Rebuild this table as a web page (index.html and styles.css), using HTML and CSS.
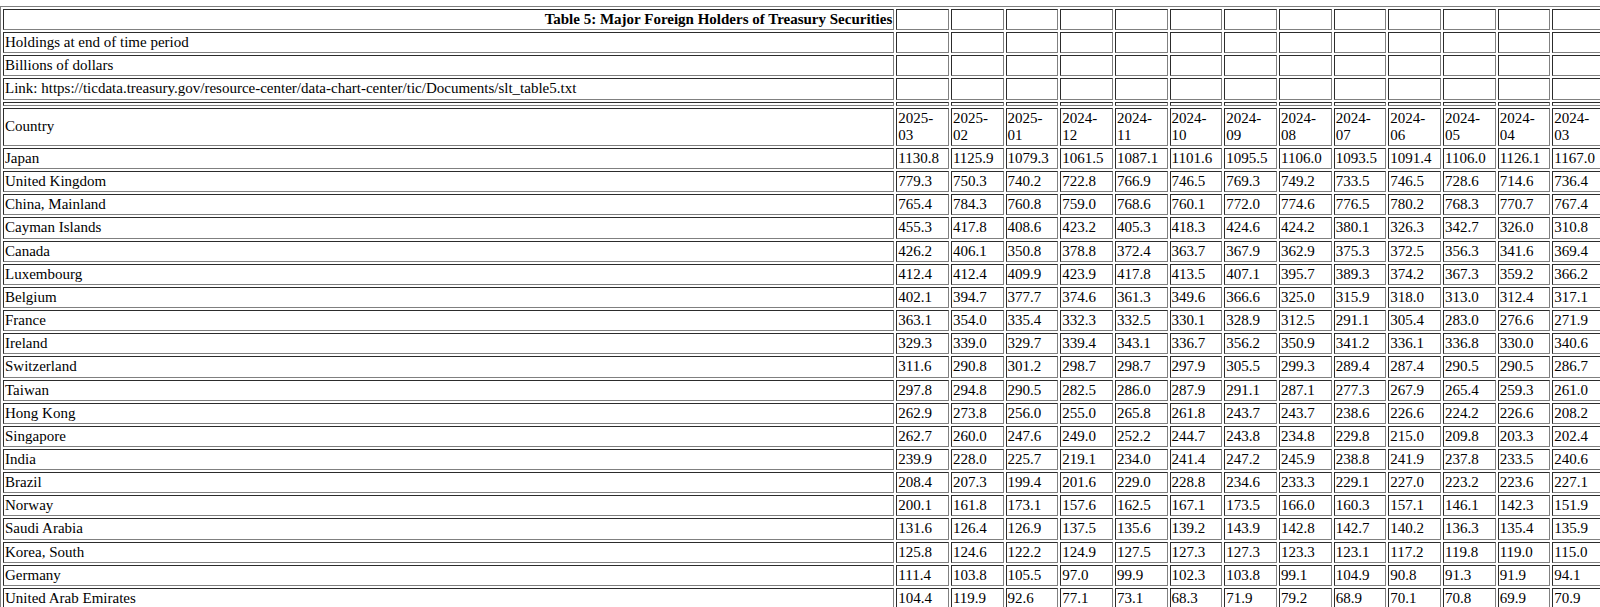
FILE: index.html
```html
<!DOCTYPE html>
<html lang="en">
<head>
<meta charset="utf-8">
<title>Table 5: Major Foreign Holders of Treasury Securities</title>
<link rel="stylesheet" href="styles.css">
</head>
<body>
<table class="sheet">
<tbody>
<tr><td class="cc title">Table 5: Major Foreign Holders of Treasury Securities</td><td class="v"></td><td class="v"></td><td class="v"></td><td class="v"></td><td class="v"></td><td class="v"></td><td class="v"></td><td class="v"></td><td class="v"></td><td class="v"></td><td class="v"></td><td class="v"></td><td class="v"></td></tr>
<tr><td class="cc">Holdings at end of time period</td><td></td><td></td><td></td><td></td><td></td><td></td><td></td><td></td><td></td><td></td><td></td><td></td><td></td></tr>
<tr><td class="cc">Billions of dollars</td><td></td><td></td><td></td><td></td><td></td><td></td><td></td><td></td><td></td><td></td><td></td><td></td><td></td></tr>
<tr><td class="cc">Link: https://ticdata.treasury.gov/resource-center/data-chart-center/tic/Documents/slt_table5.txt</td><td></td><td></td><td></td><td></td><td></td><td></td><td></td><td></td><td></td><td></td><td></td><td></td><td></td></tr>
<tr class="sep"><td></td><td></td><td></td><td></td><td></td><td></td><td></td><td></td><td></td><td></td><td></td><td></td><td></td><td></td></tr>
<tr><td class="cc">Country</td><td>2025-<br>03</td><td>2025-<br>02</td><td>2025-<br>01</td><td>2024-<br>12</td><td>2024-<br>11</td><td>2024-<br>10</td><td>2024-<br>09</td><td>2024-<br>08</td><td>2024-<br>07</td><td>2024-<br>06</td><td>2024-<br>05</td><td>2024-<br>04</td><td>2024-<br>03</td></tr>
<tr><td>Japan</td><td>1130.8</td><td>1125.9</td><td>1079.3</td><td>1061.5</td><td>1087.1</td><td>1101.6</td><td>1095.5</td><td>1106.0</td><td>1093.5</td><td>1091.4</td><td>1106.0</td><td>1126.1</td><td>1167.0</td></tr>
<tr><td>United Kingdom</td><td>779.3</td><td>750.3</td><td>740.2</td><td>722.8</td><td>766.9</td><td>746.5</td><td>769.3</td><td>749.2</td><td>733.5</td><td>746.5</td><td>728.6</td><td>714.6</td><td>736.4</td></tr>
<tr><td>China, Mainland</td><td>765.4</td><td>784.3</td><td>760.8</td><td>759.0</td><td>768.6</td><td>760.1</td><td>772.0</td><td>774.6</td><td>776.5</td><td>780.2</td><td>768.3</td><td>770.7</td><td>767.4</td></tr>
<tr><td>Cayman Islands</td><td>455.3</td><td>417.8</td><td>408.6</td><td>423.2</td><td>405.3</td><td>418.3</td><td>424.6</td><td>424.2</td><td>380.1</td><td>326.3</td><td>342.7</td><td>326.0</td><td>310.8</td></tr>
<tr><td>Canada</td><td>426.2</td><td>406.1</td><td>350.8</td><td>378.8</td><td>372.4</td><td>363.7</td><td>367.9</td><td>362.9</td><td>375.3</td><td>372.5</td><td>356.3</td><td>341.6</td><td>369.4</td></tr>
<tr><td>Luxembourg</td><td>412.4</td><td>412.4</td><td>409.9</td><td>423.9</td><td>417.8</td><td>413.5</td><td>407.1</td><td>395.7</td><td>389.3</td><td>374.2</td><td>367.3</td><td>359.2</td><td>366.2</td></tr>
<tr><td>Belgium</td><td>402.1</td><td>394.7</td><td>377.7</td><td>374.6</td><td>361.3</td><td>349.6</td><td>366.6</td><td>325.0</td><td>315.9</td><td>318.0</td><td>313.0</td><td>312.4</td><td>317.1</td></tr>
<tr><td>France</td><td>363.1</td><td>354.0</td><td>335.4</td><td>332.3</td><td>332.5</td><td>330.1</td><td>328.9</td><td>312.5</td><td>291.1</td><td>305.4</td><td>283.0</td><td>276.6</td><td>271.9</td></tr>
<tr><td>Ireland</td><td>329.3</td><td>339.0</td><td>329.7</td><td>339.4</td><td>343.1</td><td>336.7</td><td>356.2</td><td>350.9</td><td>341.2</td><td>336.1</td><td>336.8</td><td>330.0</td><td>340.6</td></tr>
<tr><td>Switzerland</td><td>311.6</td><td>290.8</td><td>301.2</td><td>298.7</td><td>298.7</td><td>297.9</td><td>305.5</td><td>299.3</td><td>289.4</td><td>287.4</td><td>290.5</td><td>290.5</td><td>286.7</td></tr>
<tr><td>Taiwan</td><td>297.8</td><td>294.8</td><td>290.5</td><td>282.5</td><td>286.0</td><td>287.9</td><td>291.1</td><td>287.1</td><td>277.3</td><td>267.9</td><td>265.4</td><td>259.3</td><td>261.0</td></tr>
<tr><td>Hong Kong</td><td>262.9</td><td>273.8</td><td>256.0</td><td>255.0</td><td>265.8</td><td>261.8</td><td>243.7</td><td>243.7</td><td>238.6</td><td>226.6</td><td>224.2</td><td>226.6</td><td>208.2</td></tr>
<tr><td>Singapore</td><td>262.7</td><td>260.0</td><td>247.6</td><td>249.0</td><td>252.2</td><td>244.7</td><td>243.8</td><td>234.8</td><td>229.8</td><td>215.0</td><td>209.8</td><td>203.3</td><td>202.4</td></tr>
<tr><td>India</td><td>239.9</td><td>228.0</td><td>225.7</td><td>219.1</td><td>234.0</td><td>241.4</td><td>247.2</td><td>245.9</td><td>238.8</td><td>241.9</td><td>237.8</td><td>233.5</td><td>240.6</td></tr>
<tr><td>Brazil</td><td>208.4</td><td>207.3</td><td>199.4</td><td>201.6</td><td>229.0</td><td>228.8</td><td>234.6</td><td>233.3</td><td>229.1</td><td>227.0</td><td>223.2</td><td>223.6</td><td>227.1</td></tr>
<tr><td>Norway</td><td>200.1</td><td>161.8</td><td>173.1</td><td>157.6</td><td>162.5</td><td>167.1</td><td>173.5</td><td>166.0</td><td>160.3</td><td>157.1</td><td>146.1</td><td>142.3</td><td>151.9</td></tr>
<tr><td>Saudi Arabia</td><td>131.6</td><td>126.4</td><td>126.9</td><td>137.5</td><td>135.6</td><td>139.2</td><td>143.9</td><td>142.8</td><td>142.7</td><td>140.2</td><td>136.3</td><td>135.4</td><td>135.9</td></tr>
<tr><td>Korea, South</td><td>125.8</td><td>124.6</td><td>122.2</td><td>124.9</td><td>127.5</td><td>127.3</td><td>127.3</td><td>123.3</td><td>123.1</td><td>117.2</td><td>119.8</td><td>119.0</td><td>115.0</td></tr>
<tr><td>Germany</td><td>111.4</td><td>103.8</td><td>105.5</td><td>97.0</td><td>99.9</td><td>102.3</td><td>103.8</td><td>99.1</td><td>104.9</td><td>90.8</td><td>91.3</td><td>91.9</td><td>94.1</td></tr>
<tr><td>United Arab Emirates</td><td>104.4</td><td>119.9</td><td>92.6</td><td>77.1</td><td>73.1</td><td>68.3</td><td>71.9</td><td>79.2</td><td>68.9</td><td>70.1</td><td>70.8</td><td>69.9</td><td>70.9</td></tr>
</tbody>
</table>
</body>
</html>
```
FILE: styles.css
```css
html {
  overflow: hidden;
  background: #ffffff;
}

body {
  margin: 6px 0 0 0;
  font-family: "Liberation Serif", "Times New Roman", serif;
  font-size: 15px;
  line-height: 17.15px;
  color: #000000;
  background: #ffffff;
}

.sheet {
  table-layout: fixed;
  width: 1608px;
  border-collapse: separate;
  border-spacing: 2px;
  border: 1px outset #808080;
}

.sheet td {
  box-sizing: border-box;
  border: 1px inset #808080;
  padding: 1px;
  text-align: left;
  vertical-align: middle;
  white-space: nowrap;
  overflow: hidden;
}

.sheet .cc {
  width: 891px;
}

.sheet .v {
  width: 52.67px;
}

.sheet .title {
  font-weight: bold;
  text-align: right;
}
```
